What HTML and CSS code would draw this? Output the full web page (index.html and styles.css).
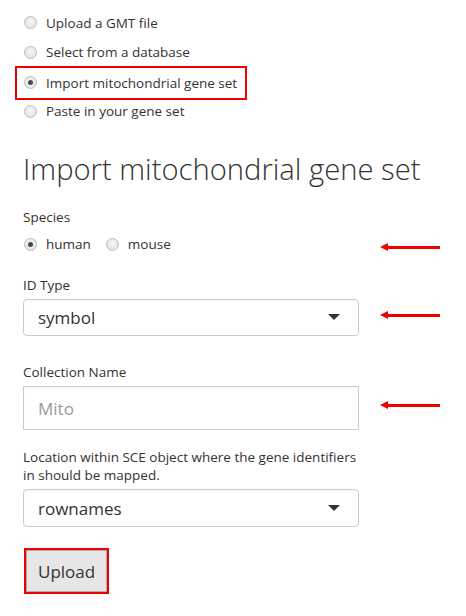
FILE: index.html
```html
<!DOCTYPE html>
<html>
<head>
<meta charset="utf-8">
<link rel="stylesheet" href="styles.css">
</head>
<body>
<div class="page">
  <div class="source-list">
    <label class="radio-row"><span class="radio"></span><span>Upload a GMT file</span></label>
    <label class="radio-row"><span class="radio"></span><span>Select from a database</span></label>
    <label class="radio-row highlighted"><span class="radio checked"></span><span>Import mitochondrial gene set</span></label>
    <label class="radio-row"><span class="radio"></span><span>Paste in your gene set</span></label>
  </div>

  <h1 class="title">Import mitochondrial gene set</h1>

  <div class="field field-species">
    <div class="field-body">
      <div class="label label-species">Species</div>
      <div class="inline-radios">
        <label class="radio-inline"><span class="radio checked"></span><span>human</span></label>
        <label class="radio-inline"><span class="radio"></span><span>mouse</span></label>
      </div>
    </div>
    <span class="arrow arrow-species"></span>
  </div>

  <div class="field field-id">
    <div class="field-body">
      <div class="label">ID Type</div>
      <div class="select"><span>symbol</span><span class="caret"></span></div>
    </div>
    <span class="arrow arrow-id"></span>
  </div>

  <div class="field field-name">
    <div class="field-body">
      <div class="label">Collection Name</div>
      <div class="text-input"><span class="placeholder">Mito</span></div>
    </div>
    <span class="arrow arrow-name"></span>
  </div>

  <div class="field field-location">
    <div class="field-body">
      <div class="label multi">Location within SCE object where the gene identifiers in should be mapped.</div>
      <div class="select select-short"><span>rownames</span><span class="caret"></span></div>
    </div>
  </div>

  <div class="button-wrap"><button class="btn">Upload</button></div>
</div>
</body>
</html>
```

FILE: styles.css
```css
html, body {
  margin: 0;
  padding: 0;
  background: #ffffff;
}
body {
  font-family: "Open Sans", "Noto Sans", "DejaVu Sans", sans-serif;
  color: #333333;
}
.page {
  width: 466px;
  padding: 8px 0 0 23px;
  box-sizing: border-box;
}
.source-list {
  display: flex;
  flex-direction: column;
}
.radio-row {
  display: flex;
  align-items: center;
  gap: 9px;
  height: 29.5px;
  font-size: 13.5px;
  margin-left: -6px;
  padding-left: 7px;
  width: 228px;
  box-sizing: border-box;
}
.radio-row.highlighted {
  outline: 2px solid #ee0000;
  outline-offset: 0px;
  margin-top: 1px;
  margin-bottom: -1px;
}
.radio {
  display: inline-block;
  width: 13px;
  height: 13px;
  border-radius: 50%;
  box-sizing: border-box;
  border: 1px solid #bcbcbc;
  background: radial-gradient(circle at 50% 40%, #f6f6f6 0%, #dedede 100%);
  position: relative;
  flex: none;
}
.radio.checked::after {
  content: "";
  position: absolute;
  left: 3px;
  top: 3px;
  width: 5px;
  height: 5px;
  border-radius: 50%;
  background: #4a4a4a;
}
.title {
  font-weight: 300;
  font-size: 29.2px;
  margin: 25px 0 21px 0;
  line-height: 36px;
  color: #333;
}
.field {
  display: flex;
  align-items: flex-start;
}
.field-species { margin-bottom: 21.5px; }
.field-id { margin-bottom: 27.5px; }
.field-name { margin-bottom: 19px; }
.field-location { margin-bottom: 21px; }
.field-body {
  width: 336px;
}
.label {
  font-size: 13.5px;
  line-height: 18px;
  margin-bottom: 5px;
}
.label-species {
  margin-bottom: 8px;
}
.label.multi {
  line-height: 17.5px;
  margin-bottom: 5px;
}
.inline-radios {
  display: flex;
  gap: 15px;
  font-size: 13.5px;
  height: 20px;
  align-items: center;
  padding-left: 1px;
}
.radio-inline {
  display: flex;
  align-items: center;
  gap: 9px;
}
.select, .text-input {
  display: flex;
  align-items: center;
  justify-content: space-between;
  box-sizing: border-box;
  border: 1px solid #cccccc;
  border-radius: 4px;
  height: 37px;
  padding: 0 18px 0 14px;
  font-size: 17px;
  color: #333;
  box-shadow: inset 0 1px 1px rgba(0,0,0,0.04);
}
.select-short {
  height: 38px;
}
.text-input {
  border-radius: 0;
  height: 44px;
}
.placeholder {
  color: #999;
}
.caret {
  width: 0;
  height: 0;
  border-left: 6px solid transparent;
  border-right: 6px solid transparent;
  border-top: 6px solid #333;
}
.arrow {
  display: block;
  position: relative;
  width: 54px;
  height: 3px;
  background: #ee0000;
  margin-left: 27px;
}
.arrow::before {
  content: "";
  position: absolute;
  left: -6px;
  top: -3px;
  border-right: 8px solid #ee0000;
  border-top: 4.5px solid transparent;
  border-bottom: 4.5px solid transparent;
}
.arrow-species { margin-top: 37.5px; }
.arrow-id { margin-top: 38px; }
.arrow-name { margin-top: 41px; }
.button-wrap {
  display: inline-block;
  border: 2px solid #ee0000;
  margin-left: 1px;
}
.btn {
  display: block;
  font-family: "Open Sans", "Noto Sans", sans-serif;
  font-size: 17px;
  color: #333;
  background: #e6e6e6;
  border: 1px solid #adadad;
  padding: 0 11px;
  height: 42px;
  margin: 0;
}
```
